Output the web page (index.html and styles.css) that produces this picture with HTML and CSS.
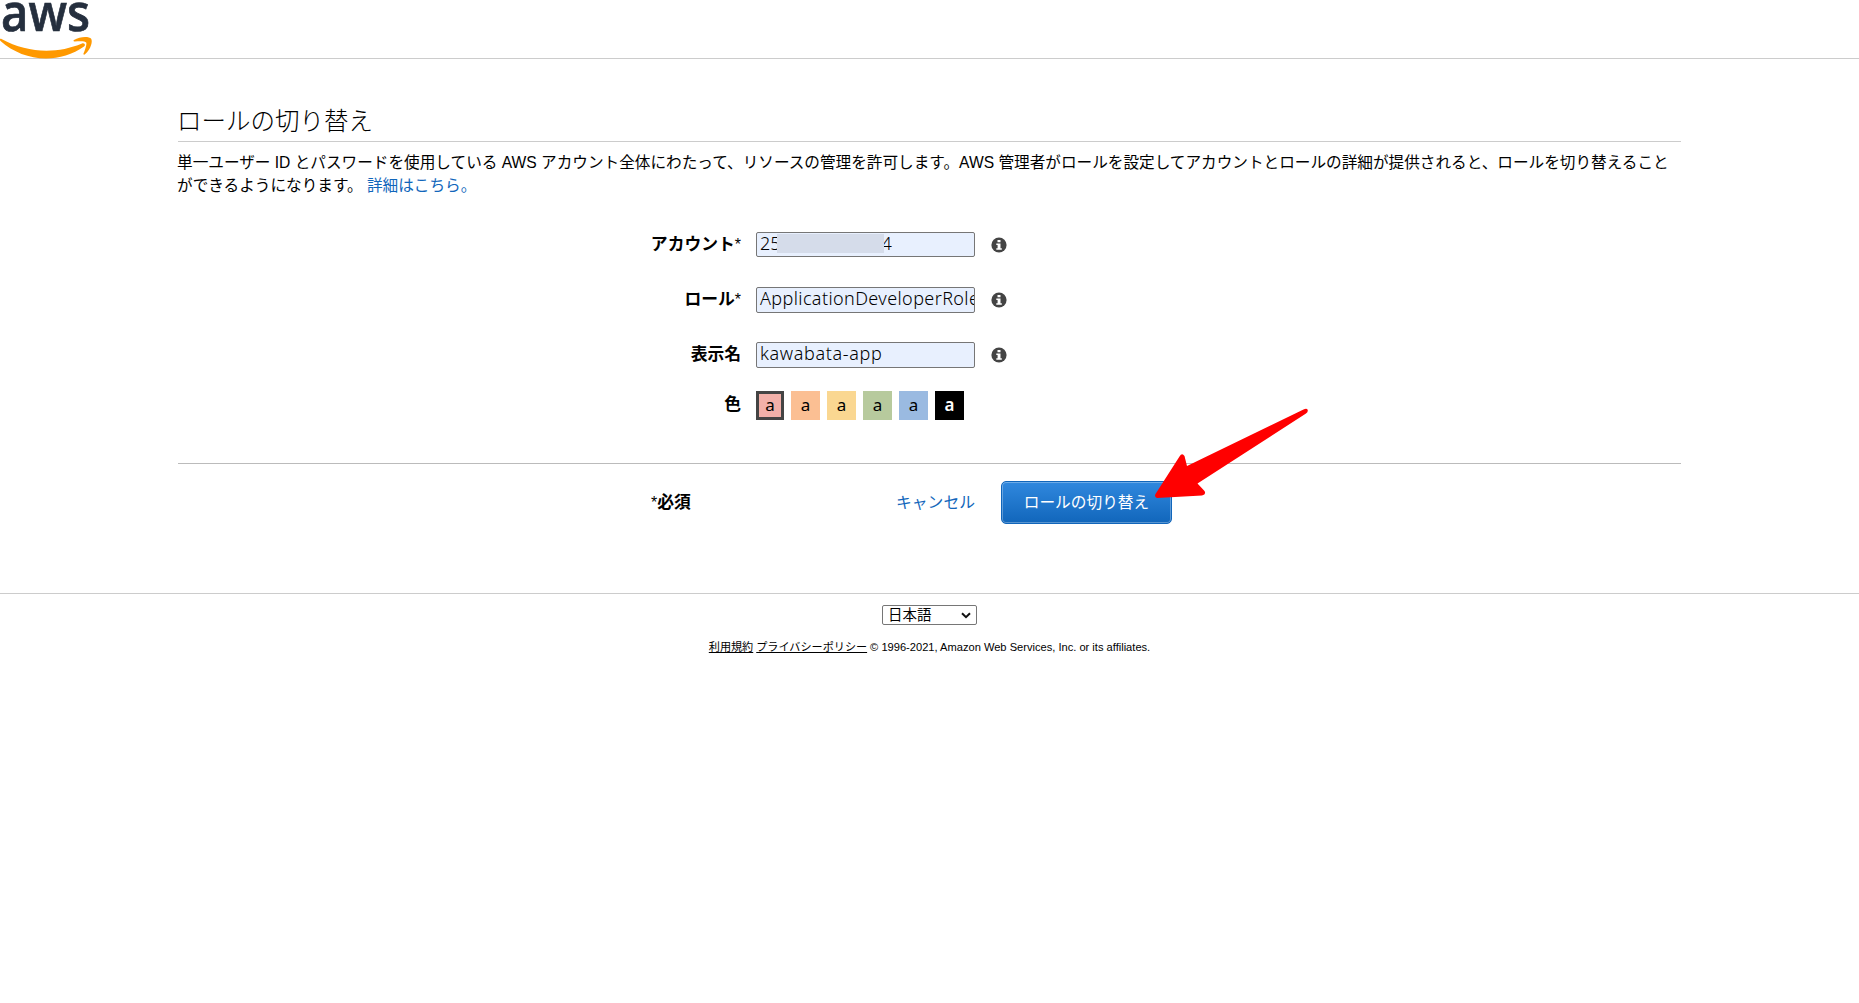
FILE: index.html
```html
<!DOCTYPE html>
<html lang="ja">
<head>
<meta charset="utf-8">
<title>ロールの切り替え</title>
<link rel="stylesheet" href="styles.css">
</head>
<body>
<header class="header">
  <svg class="logo" width="94" height="58" viewBox="0 0 94 58" role="img" aria-label="aws">
    <text class="logo-text" x="1" y="31" textLength="89" lengthAdjust="spacingAndGlyphs">aws</text>
    <path fill="#f90" d="M1.5 39C28 53.5 57 54 82 43.500C84.500 42.500 86 45 84 46.500C73 54.500 59 58.500 46 58.500C29 58.500 13 52 .5 41C-.8 39.800 0 38.300 1.500 39Z"/>
    <path fill="#f90" d="M74 40C80 36 89.500 36.500 91 38.500C93 41 91 49 85 54.300C84 55.200 83 54.600 83.600 53.300C85.500 48.600 87 43.700 86.200 42.400C85 40.800 79.500 41 74.800 41.500C73.500 41.700 73 40.700 74 40Z"/>
  </svg>
</header>
<main class="main">
  <h1 class="title">ロールの切り替え</h1>
  <p class="intro"><span class="intro-line">単一ユーザー ID とパスワードを使用している AWS アカウント全体にわたって、リソースの管理を許可します。AWS 管理者がロールを設定してアカウントとロールの詳細が提供されると、ロールを切り替えること</span><br>ができるようになります。 <a class="link">詳細はこちら。</a></p>
  <form class="form">
    <div class="row">
      <div class="label">アカウント<span class="star">*</span></div>
      <div class="field account"><span class="start">25</span><span class="mask"></span><span>4</span></div>
      <svg class="info" viewBox="0 0 16 16"><circle cx="8" cy="8" r="7.600"/><path d="M6.500 3h3v2.300h-3zM5.300 6.500h4.200v4.700h1.300v1.500H5.300v-1.500h1.300V8H5.300z"/></svg>
    </div>
    <div class="row">
      <div class="label">ロール<span class="star">*</span></div>
      <div class="field role">ApplicationDeveloperRole</div>
      <svg class="info" viewBox="0 0 16 16"><circle cx="8" cy="8" r="7.600"/><path d="M6.500 3h3v2.300h-3zM5.300 6.500h4.200v4.700h1.300v1.500H5.300v-1.500h1.300V8H5.300z"/></svg>
    </div>
    <div class="row">
      <div class="label">表示名</div>
      <div class="field name">kawabata-app</div>
      <svg class="info" viewBox="0 0 16 16"><circle cx="8" cy="8" r="7.600"/><path d="M6.500 3h3v2.300h-3zM5.300 6.500h4.200v4.700h1.300v1.500H5.300v-1.500h1.300V8H5.300z"/></svg>
    </div>
    <div class="row colors">
      <div class="label">色</div>
      <div class="swatches">
        <span class="swatch red selected">a</span><span class="swatch orange">a</span><span class="swatch yellow">a</span><span class="swatch green">a</span><span class="swatch blue">a</span><span class="swatch black">a</span>
      </div>
    </div>
    <div class="actions">
      <div class="required"><span class="star">*</span>必須</div>
      <a class="link cancel">キャンセル</a>
      <button class="submit" type="button">ロールの切り替え</button>
    </div>
  </form>
</main>
<footer class="footer">
  <div class="language">日本語<svg width="10" height="7" viewBox="0 0 10 7"><path d="M1 1.200L5 5.200L9 1.200" fill="none" stroke="#111" stroke-width="2"/></svg></div>
  <div class="legal"><a class="terms">利用規約</a> <a class="privacy">プライバシーポリシー</a> <span class="copyright">© 1996-2021, Amazon Web Services, Inc. or its affiliates.</span></div>
</footer>
<svg class="arrow" width="156" height="92" viewBox="0 0 156 92"><path fill="#f00" d="M150.500 1.500Q153.500 0 154.500 1.500Q155.500 3.500 153 5.500L44.500 75.500L51.500 83Q53.500 86.500 49 87.500L4 90Q1 89 2.500 86L26.500 48.500Q29 44.500 31.500 48L34 58Z"/></svg>
</body>
</html>
```
FILE: styles.css
```css
* { box-sizing: border-box; }
body {
  margin: 0;
  background: #fff;
  color: #000;
  font-family: "Liberation Sans", "Noto Sans CJK JP", sans-serif;
  font-size: 16px;
  font-weight: 400;
}
.header { height: 59px; border-bottom: 1px solid #ccc; }
.logo { display: block; overflow: visible; }
.logo-text { font: 600 52px "Open Sans", sans-serif; fill: #252f3e; stroke: #252f3e; stroke-width: .7px; }
.main { width: 1503px; margin: 0 auto; padding-top: 46px; }
.title {
  height: 37px;
  margin: 0;
  border-bottom: 1px solid #ccc;
  font-size: 24.5px;
  font-weight: 300;
  line-height: 34px;
  text-indent: -1px;
}
.intro { height: 69px; margin: 9px 0 0 -1px; font-size: 15.63px; line-height: 23px; white-space: nowrap; }
.link { color: #1166bb; }
.form { display: flex; flex-direction: column; padding-top: 12px; }
.row { display: grid; grid-template-columns: 563px 219px 16px; column-gap: 15px; height: 55px; align-items: start; }
.label { font-size: 16.8px; font-weight: 700; line-height: 25px; text-align: right; white-space: nowrap; }
.star { font-weight: 400; font-size: 16px; }
.field {
  display: flex;
  height: 26px;
  padding: 0 3px;
  border: 1px solid #767676;
  border-radius: 2px;
  background: #e8f0fe;
  font: 300 18px/21px "Noto Sans", sans-serif;
  letter-spacing: .65px;
  white-space: nowrap;
  overflow: hidden;
}
.account { height: 25px; letter-spacing: 0; }
.role { letter-spacing: .4px; }
.start { flex: none; }
.mask { position: relative; flex: none; width: 107px; height: 19px; margin: 1px -2px 0 -4px; background: #d5dcea; }
.info { width: 16px; height: 16px; margin: 5px 0 0 1px; fill: #444; }
.info path { fill: #fff; }
.colors { height: 72px; margin-top: -6px; }
.colors .label { line-height: 28px; }
.swatches { display: flex; gap: 7px; }
.swatch { flex: none; width: 29px; height: 29px; font: 400 17px/28px "Noto Sans", sans-serif; text-align: center; }
.red { width: 28px; background: #f2b0a9; }
.selected { border: 3px solid #444; line-height: 22px; }
.orange { background: #fbbf93; }
.yellow { background: #fad791; }
.green { background: #b7ca9d; }
.blue { background: #9abae1; }
.black { background: #000; color: #fff; font-weight: 600; }
.actions { flex: none; display: flex; height: 130px; padding: 17px 0 0 473px; border-top: 1px solid #bbb; }
.required { width: 245px; font-size: 16.8px; font-weight: 700; line-height: 43px; }
.cancel { width: 105px; font-size: 15.8px; line-height: 43px; white-space: nowrap; }
.submit {
  width: 171px;
  height: 43px;
  padding: 0 0 2px;
  border: 1px solid #1166bb;
  border-radius: 5px;
  background: linear-gradient(#3088de, #1166bb);
  box-shadow: inset 0 0 0 1px rgba(255,255,255,.3);
  color: #fff;
  font: 400 15.7px "Noto Sans CJK JP", sans-serif;
}
.footer { display: flex; flex-direction: column; align-items: center; padding-top: 11px; border-top: 1px solid #ccc; }
.language { display: flex; align-items: center; justify-content: space-between; width: 95px; height: 20px; padding: 0 5px; border: 1px solid #767676; border-radius: 2px; font-size: 14.5px; line-height: 18px; }
.legal { display: flex; gap: 3px; margin-top: 13px; font-size: 11.12px; line-height: 18px; white-space: nowrap; }
.legal a { text-decoration: underline; }
.arrow { position: absolute; left: 1153px; top: 408px; }
```
